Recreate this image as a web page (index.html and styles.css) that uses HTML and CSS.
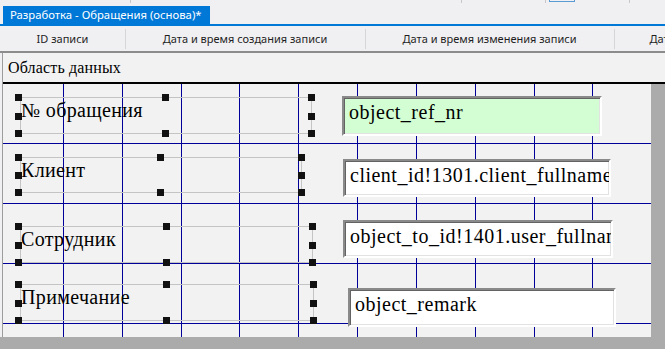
FILE: index.html
```html
<!DOCTYPE html>
<html lang="ru">
<head>
<meta charset="utf-8">
<title>Разработка - Обращения (основа)</title>
<link rel="stylesheet" href="styles.css">
</head>
<body>
<div class="strip">
  <span class="mark m1"></span>
  <span class="mark m2"></span>
  <span class="mark m3"></span>
  <span class="sel-box"></span>
  <span class="mark m4"></span>
</div>
<div class="tabbar">
  <div class="tab">Разработка - Обращения (основа)*</div>
</div>
<div class="header">
  <div class="col c1">ID записи</div>
  <div class="col c2">Дата и время создания записи</div>
  <div class="col c3">Дата и время изменения записи</div>
  <div class="col c4">Дата и время удаления записи</div>
</div>
<div class="designer">
  <div class="frame">
    <div class="band">Область данных</div>
    <div class="work">
      <div class="canvas">
        <svg class="grid" width="648" height="253" viewBox="0 0 648 253" shape-rendering="crispEdges">
          <g stroke="#000099" stroke-width="1">
            <line x1="60.5" y1="0" x2="60.5" y2="253"/>
            <line x1="119.5" y1="0" x2="119.5" y2="253"/>
            <line x1="178.5" y1="0" x2="178.5" y2="253"/>
            <line x1="236.5" y1="0" x2="236.5" y2="253"/>
            <line x1="295.5" y1="0" x2="295.5" y2="253"/>
            <line x1="354.5" y1="0" x2="354.5" y2="253"/>
            <line x1="413.5" y1="0" x2="413.5" y2="253"/>
            <line x1="472.5" y1="0" x2="472.5" y2="253"/>
            <line x1="531.5" y1="0" x2="531.5" y2="253"/>
            <line x1="589.5" y1="0" x2="589.5" y2="253"/>
            <line x1="0" y1="59.5" x2="648" y2="59.5"/>
            <line x1="0" y1="119.5" x2="648" y2="119.5"/>
            <line x1="0" y1="179.5" x2="648" y2="179.5"/>
            <line x1="0" y1="239.5" x2="648" y2="239.5"/>
          </g>
        </svg>

        <div class="label l1">№ обращения
          <i class="h tl"></i><i class="h tc"></i><i class="h tr"></i>
          <i class="h ml"></i><i class="h mr"></i>
          <i class="h bl"></i><i class="h bc"></i><i class="h br"></i>
        </div>
        <div class="field f1 green">object_ref_nr</div>

        <div class="label l2">Клиент
          <i class="h tl"></i><i class="h tc"></i><i class="h tr"></i>
          <i class="h ml"></i><i class="h mr"></i>
          <i class="h bl"></i><i class="h bc"></i><i class="h br"></i>
        </div>
        <div class="field f2">client_id!1301.client_fullname</div>

        <div class="label l3">Сотрудник
          <i class="h tl"></i><i class="h tc"></i><i class="h tr"></i>
          <i class="h ml"></i><i class="h mr"></i>
          <i class="h bl"></i><i class="h bc"></i><i class="h br"></i>
        </div>
        <div class="field f3">object_to_id!1401.user_fullname</div>

        <div class="label l4">Примечание
          <i class="h tl"></i><i class="h tc"></i><i class="h tr"></i>
          <i class="h ml"></i><i class="h mr"></i>
          <i class="h bl"></i><i class="h bc"></i><i class="h br"></i>
        </div>
        <div class="field f4">object_remark</div>
      </div>
      <div class="fill"></div>
    </div>
  </div>
</div>
</body>
</html>
```
FILE: styles.css
```css
* { box-sizing: border-box; }
html, body { margin: 0; padding: 0; }
body {
  width: 665px;
  height: 349px;
  overflow: hidden;
  background: #ababab;
  font-family: "Noto Sans", "Liberation Sans", sans-serif;
}

/* top strip */
.strip {
  height: 6px;
  display: flex;
  align-items: flex-start;
  background: #f0f0f2;
}
.mark { width: 1px; height: 3px; background: #c8c8cc; }
.m1 { margin-left: 130px; }
.m2 { margin-left: 330px; }
.m3 { margin-left: 83px; }
.m4 { margin-left: 54px; }
.sel-box {
  margin-left: 3px;
  width: 26px;
  height: 2px;
  border: 1px solid #5b9bd5;
  border-top: none;
}

/* tab bar */
.tabbar {
  height: 20px;
  background: #f0f0f2;
  border-bottom: 2px solid #0078d7;
  display: flex;
  align-items: flex-end;
}
.tab {
  margin-left: 3px;
  width: 207px;
  height: 18px;
  background: #0078d7;
  color: #ffffff;
  font-size: 11.3px;
  line-height: 18px;
  padding-left: 7px;
  white-space: nowrap;
  overflow: hidden;
}

/* column header */
.header {
  height: 27px;
  background: #f0f0f2;
  border-bottom: 2px solid #8c8c8c;
  display: flex;
  overflow: hidden;
  white-space: nowrap;
}
.col {
  flex: none;
  height: 25px;
  font-size: 11px;
  line-height: 25px;
  color: #1e1e1e;
  text-align: center;
}
.c1 { width: 125px; }
.c2 { width: 240px; }
.c3 { width: 249px; }
.c4 { width: 236px; }
.c2, .c3, .c4 {
  background: linear-gradient(#d6d6d6, #d6d6d6) no-repeat 0 3px / 1px 20px;
}

/* designer */
.designer {
  padding-left: 2px;
  background: #f0f0f2;
}
.frame {
  border-left: 1px solid #9d9d9d;
}
.band {
  height: 31px;
  background: #f2f2f2;
  border-bottom: 2px solid #000000;
  font-family: "Liberation Serif", "Times New Roman", serif;
  font-size: 16px;
  letter-spacing: 0.15px;
  line-height: 29px;
  padding-left: 5px;
  color: #000;
}
.work {
  display: flex;
  background: #ababab;
}
.canvas {
  position: relative;
  width: 648px;
  height: 253px;
  background: #f2f2f2;
  overflow: hidden;
  font-family: "Liberation Serif", "Times New Roman", serif;
  font-size: 20px;
  letter-spacing: 0.35px;
  color: #000;
}
.fill {
  flex: 1;
  background: #ababab;
}
.grid {
  position: absolute;
  left: 0;
  top: 0;
}

/* label controls */
.label {
  position: absolute;
  border: 1px solid #c4c4c4;
  padding: 1px 0 0 0;
  line-height: 23px;
  white-space: nowrap;
}
.l1 { left: 17px; top: 13px; width: 292px; height: 37px; }
.l2 { left: 17px; top: 73px; width: 282px; height: 36px; }
.l3 { left: 17px; top: 142px; width: 293px; height: 37px; }
.l4 { left: 17px; top: 200px; width: 294px; height: 37px; }

.h {
  position: absolute;
  width: 7px;
  height: 7px;
  background: #111111;
}
.tl, .tc, .tr { top: -4px; }
.ml, .mr { top: calc(50% - 3px); }
.bl, .bc, .br { bottom: -4px; }
.tl, .ml, .bl { left: -6px; }
.tc, .bc { left: calc(50% - 4px); }
.tr, .mr, .br { right: -4px; }

/* field controls */
.field {
  position: absolute;
  background: #ffffff;
  border-top: 2px solid #8a8a8a;
  border-left: 2px solid #8a8a8a;
  border-right: 2px solid #ffffff;
  border-bottom: 2px solid #ffffff;
  box-shadow: inset 1px 1px 0 #636363, inset -1px -1px 0 #e2e2e2;
  padding: 3px 0 0 5px;
  line-height: 23px;
  letter-spacing: 0.5px;
  white-space: nowrap;
  overflow: hidden;
}
.green { background: #d3fed3; }
.f1 { left: 339px; top: 12px; width: 260px; height: 40px; }
.f2 { left: 340px; top: 75px; width: 268px; height: 38px; }
.f3 { left: 340px; top: 136px; width: 270px; height: 38px; }
.f4 { left: 345px; top: 204px; width: 268px; height: 39px; }
```
